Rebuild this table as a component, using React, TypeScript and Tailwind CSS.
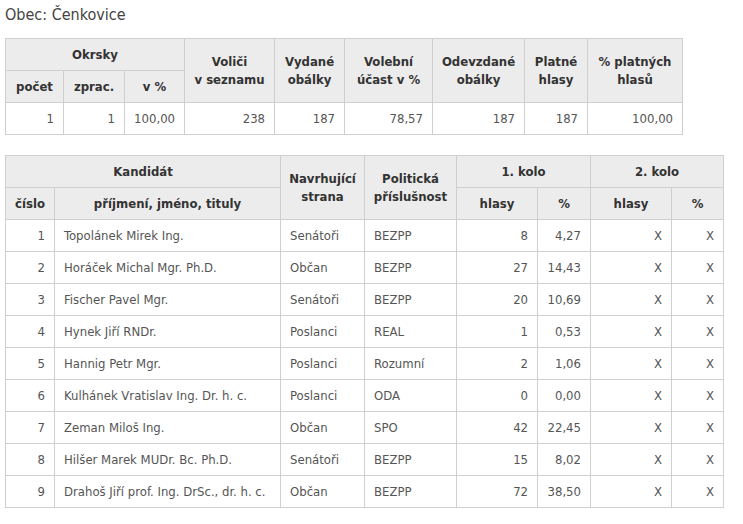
const okrsky = { pocet: "1", zprac: "1", proc: "100,00", volici: "238", vydane: "187", ucast: "78,57", odevzdane: "187", platne: "187", procPlatnych: "100,00" };

const kandidati = [
  { cislo: 1, jmeno: "Topolánek Mirek Ing.", strana: "Senátoři", prislusnost: "BEZPP", hlasy: 8, proc: "4,27" },
  { cislo: 2, jmeno: "Horáček Michal Mgr. Ph.D.", strana: "Občan", prislusnost: "BEZPP", hlasy: 27, proc: "14,43" },
  { cislo: 3, jmeno: "Fischer Pavel Mgr.", strana: "Senátoři", prislusnost: "BEZPP", hlasy: 20, proc: "10,69" },
  { cislo: 4, jmeno: "Hynek Jiří RNDr.", strana: "Poslanci", prislusnost: "REAL", hlasy: 1, proc: "0,53" },
  { cislo: 5, jmeno: "Hannig Petr Mgr.", strana: "Poslanci", prislusnost: "Rozumní", hlasy: 2, proc: "1,06" },
  { cislo: 6, jmeno: "Kulhánek Vratislav Ing. Dr. h. c.", strana: "Poslanci", prislusnost: "ODA", hlasy: 0, proc: "0,00" },
  { cislo: 7, jmeno: "Zeman Miloš Ing.", strana: "Občan", prislusnost: "SPO", hlasy: 42, proc: "22,45" },
  { cislo: 8, jmeno: "Hilšer Marek MUDr. Bc. Ph.D.", strana: "Senátoři", prislusnost: "BEZPP", hlasy: 15, proc: "8,02" },
  { cislo: 9, jmeno: "Drahoš Jiří prof. Ing. DrSc., dr. h. c.", strana: "Občan", prislusnost: "BEZPP", hlasy: 72, proc: "38,50" },
];

const th = "border border-[#cfcfcf] bg-[#ececec] font-bold text-[#333] text-center leading-[18px] px-1";
const td = "border border-[#cfcfcf] h-[32px] px-[9px] text-[#555] leading-[16px]";

export default function App() {
  return (
    <div className="bg-white min-h-screen px-[5px] pt-[5px] font-['DejaVu_Sans_Condensed','DejaVu_Sans',sans-serif] text-[13px]">
      <h2 className="text-[16px] text-[#444] leading-[20px] mb-[13px]">Obec: Čenkovice</h2>

      <table className="table-fixed border-collapse w-[677px]">
        <colgroup>
          <col className="w-[58px]" />
          <col className="w-[61px]" />
          <col className="w-[60px]" />
          <col className="w-[90px]" />
          <col className="w-[70px]" />
          <col className="w-[88px]" />
          <col className="w-[92px]" />
          <col className="w-[63px]" />
          <col className="w-[95px]" />
        </colgroup>
        <thead>
          <tr className="h-[32px]">
            <th colSpan={3} className={th}>Okrsky</th>
            <th rowSpan={2} className={th}>Voliči<br />v seznamu</th>
            <th rowSpan={2} className={th}>Vydané<br />obálky</th>
            <th rowSpan={2} className={th}>Volební<br />účast v %</th>
            <th rowSpan={2} className={th}>Odevzdané<br />obálky</th>
            <th rowSpan={2} className={th}>Platné<br />hlasy</th>
            <th rowSpan={2} className={th}>% platných<br />hlasů</th>
          </tr>
          <tr className="h-[32px]">
            <th className={th}>počet</th>
            <th className={th}>zprac.</th>
            <th className={th}>v %</th>
          </tr>
        </thead>
        <tbody>
          <tr>
            <td className={`${td} text-right`}>{okrsky.pocet}</td>
            <td className={`${td} text-right`}>{okrsky.zprac}</td>
            <td className={`${td} text-right`}>{okrsky.proc}</td>
            <td className={`${td} text-right`}>{okrsky.volici}</td>
            <td className={`${td} text-right`}>{okrsky.vydane}</td>
            <td className={`${td} text-right`}>{okrsky.ucast}</td>
            <td className={`${td} text-right`}>{okrsky.odevzdane}</td>
            <td className={`${td} text-right`}>{okrsky.platne}</td>
            <td className={`${td} text-right`}>{okrsky.procPlatnych}</td>
          </tr>
        </tbody>
      </table>

      <table className="table-fixed border-collapse w-[718px] mt-[20px]">
        <colgroup>
          <col className="w-[49px]" />
          <col className="w-[226px]" />
          <col className="w-[84px]" />
          <col className="w-[92px]" />
          <col className="w-[81px]" />
          <col className="w-[53px]" />
          <col className="w-[81px]" />
          <col className="w-[52px]" />
        </colgroup>
        <thead>
          <tr className="h-[32px]">
            <th colSpan={2} className={th}>Kandidát</th>
            <th rowSpan={2} className={th}>Navrhující<br />strana</th>
            <th rowSpan={2} className={th}>Politická<br />příslušnost</th>
            <th colSpan={2} className={th}>1. kolo</th>
            <th colSpan={2} className={th}>2. kolo</th>
          </tr>
          <tr className="h-[32px]">
            <th className={th}>číslo</th>
            <th className={th}>příjmení, jméno, tituly</th>
            <th className={th}>hlasy</th>
            <th className={th}>%</th>
            <th className={th}>hlasy</th>
            <th className={th}>%</th>
          </tr>
        </thead>
        <tbody>
          {kandidati.map((k) => (
            <tr key={k.cislo}>
              <td className={`${td} text-right`}>{k.cislo}</td>
              <td className={`${td} text-left`}>{k.jmeno}</td>
              <td className={`${td} text-left`}>{k.strana}</td>
              <td className={`${td} text-left`}>{k.prislusnost}</td>
              <td className={`${td} text-right`}>{k.hlasy}</td>
              <td className={`${td} text-right`}>{k.proc}</td>
              <td className={`${td} text-right`}>X</td>
              <td className={`${td} text-right`}>X</td>
            </tr>
          ))}
        </tbody>
      </table>
    </div>
  );
}
